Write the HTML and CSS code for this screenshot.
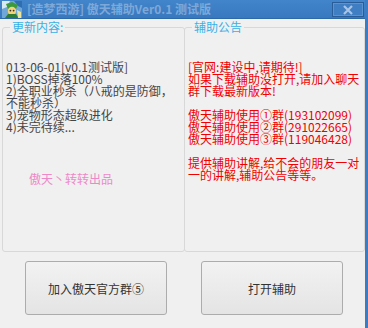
FILE: index.html
```html
<!DOCTYPE html>
<html lang="zh-CN">
<head>
<meta charset="utf-8">
<title>傲天辅助</title>
<link rel="stylesheet" href="styles.css">
</head>
<body>
<div class="window">
  <div class="titlebar">
    <svg class="app-icon" width="20" height="17" viewBox="0 0 20 17">
      <rect x="0" y="0" width="20" height="17" fill="#6fa8d8"/>
      <path d="M0 0h8l-3 6-5 2z" fill="#d8e8f4"/>
      <path d="M12 0h8v7l-4-2z" fill="#2f6fb0"/>
      <path d="M4 3l6-2 6 3-2 4H6z" fill="#3c9a3a"/>
      <circle cx="10" cy="10" r="4.2" fill="#f2d27a"/>
      <circle cx="8.4" cy="9.6" r="0.9" fill="#333"/>
      <circle cx="11.6" cy="9.6" r="0.9" fill="#333"/>
      <path d="M3 17l3-4h8l3 4z" fill="#2e7d32"/>
      <path d="M15 9l4 2v6h-3z" fill="#e9e4a0"/>
    </svg>
    <span class="title">[造梦西游] 傲天辅助Ver0.1 测试版</span>
    <div class="close">
      <svg width="12" height="10" viewBox="0 0 12 10"><path d="M2 1l8 8M10 1l-8 8" stroke="#a9c4e6" stroke-width="2.2"/></svg>
    </div>
  </div>
  <div class="client">
    <div class="groups">
      <fieldset class="group group-left">
        <legend>更新内容:</legend>
        <div class="log">013-06-01[v0.1测试版]
1)BOSS掉落100%
2)全职业秒杀（八戒的是防御，
不能秒杀）
3)宠物形态超级进化
4)未完待续...</div>
        <div class="credit">傲天丶转转出品</div>
      </fieldset>
      <fieldset class="group group-right">
        <legend>辅助公告</legend>
        <div class="notice">[官网:建设中,请期待!]
如果下载辅助没打开,请加入聊天
群下载最新版本!

傲天辅助使用①群(193102099)
傲天辅助使用②群(291022665)
傲天辅助使用③群(119046428)

提供辅助讲解,给不会的朋友一对
一的讲解,辅助公告等等。</div>
      </fieldset>
    </div>
    <div class="buttons">
      <button class="btn">加入傲天官方群⑤</button>
      <button class="btn">打开辅助</button>
    </div>
  </div>
</div>
</body>
</html>
```

FILE: styles.css
```css
html, body {
  margin: 0;
  padding: 0;
}
body {
  width: 368px;
  height: 328px;
  overflow: hidden;
  background: #f0f0f0;
  font-family: "Noto Sans CJK SC", "Liberation Sans", sans-serif;
}
.window {
  width: 368px;
  height: 328px;
  box-sizing: border-box;
  border-right: 3px solid #3b7cc2;
  display: flex;
  flex-direction: column;
}
.titlebar {
  height: 19px;
  box-sizing: border-box;
  background: linear-gradient(#4285ca, #3878bf);
  border-bottom: 1px solid #2d68a8;
  display: flex;
  align-items: center;
  position: relative;
}
.app-icon {
  margin-left: 2px;
  flex: none;
}
.title {
  margin-left: 5px;
  font-size: 12px;
  font-weight: bold;
  color: #7ea8d8;
  line-height: 18px;
  white-space: nowrap;
}
.close {
  position: absolute;
  right: 1px;
  top: 2px;
  width: 30px;
  height: 13px;
  border: 1px solid #2a5c98;
  box-shadow: inset 0 0 0 1px #5a94d0;
  background: #3f7ec2;
  display: flex;
  align-items: center;
  justify-content: center;
}
.client {
  flex: 1;
  display: flex;
  flex-direction: column;
}
.groups {
  height: 231px;
  margin-top: 2px;
  display: flex;
}
.group {
  margin: 0;
  padding: 0;
  border: 1px solid #d8d8d8;
  border-radius: 3px;
  min-width: 0;
}
.group legend {
  font-size: 12px;
  line-height: 12px;
  color: #3bb0e6;
  padding: 0 2px;
  margin-left: 7px;
}
.group-left {
  margin-left: 2px;
  width: 183px;
  box-sizing: border-box;
}
.group-right {
  margin-left: -1px;
  flex: 1;
}
.log {
  white-space: pre;
  font-size: 12px;
  line-height: 12px;
  color: #454545;
  padding: 28px 0 0 3px;
}
.credit {
  font-size: 12px;
  line-height: 14px;
  color: #ee88c8;
  margin: 39px 0 0 26px;
}
.notice {
  white-space: pre;
  font-size: 12px;
  line-height: 12px;
  color: #f00000;
  padding: 28px 0 0 3px;
}
.buttons {
  display: flex;
  gap: 34px;
  padding: 9px 0 0 25px;
}
.btn {
  width: 142px;
  height: 54px;
  border: 1px solid #acacac;
  border-radius: 3px;
  background: linear-gradient(#f2f2f2, #e4e4e4);
  font-family: "Noto Sans CJK SC", sans-serif;
  font-size: 12px;
  color: #333;
  padding: 0;
}
```
